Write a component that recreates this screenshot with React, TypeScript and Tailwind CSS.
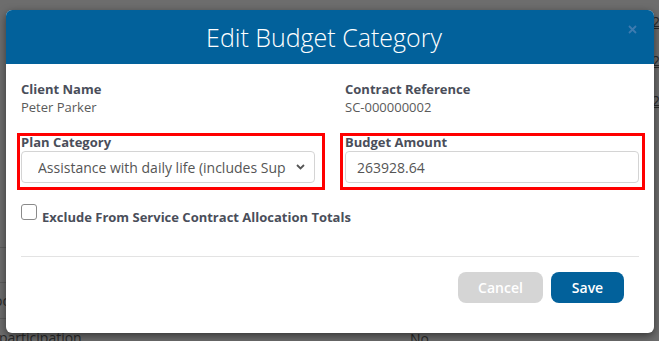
import React from "react"

const Field = ({ label, children, box }: { label: string; children: React.ReactNode; box: string }) => (
  <div className="relative">
    <div className="font-bold text-[#4a4e5a] text-[13px] leading-[18px]">{label}</div>
    {children}
    <div className={`absolute top-0 -bottom-[7px] border-[3px] border-[#ff0000] ${box}`} />
  </div>
)

export default function App() {
  return (
    <div className="relative w-[659px] h-[341px] overflow-hidden bg-[#6d6d6d] font-['Open_Sans',sans-serif]">
      {/* page behind the overlay */}
      <div className="absolute left-0 top-[247px] w-[8px] h-px bg-[#5c5c5c]" />
      <div className="absolute left-0 top-[282px] w-[8px] h-px bg-[#5c5c5c]" />
      <div className="absolute left-0 top-[318px] w-[8px] h-px bg-[#5c5c5c]" />
      <div className="absolute left-[-6px] top-[290px] text-[14px] text-[#2a2a2a]">oc</div>
      <div className="absolute left-[-1px] top-[327px] text-[14px] text-[#2a2a2a]">participation</div>
      <div className="absolute left-[410px] top-[328px] text-[14px] text-[#2a2a2a]">No</div>
      <div className="absolute left-[652px] top-[11px] text-[14px] text-[#2a2a2a] underline">2</div>
      <div className="absolute left-[652px] top-[50px] text-[14px] text-[#2a2a2a] underline">2</div>
      <div className="absolute left-[652px] top-[90px] text-[14px] text-[#2a2a2a] underline">2</div>

      {/* modal */}
      <div className="absolute left-[6px] top-[10px] w-[648px] h-[323px] bg-white rounded-[6px] overflow-hidden shadow-[0_3px_9px_rgba(0,0,0,0.5)]">
        <div className="relative h-[54px] bg-[#02619b] flex items-center justify-center pr-[12px]">
          <h2 className="text-white text-[25px] font-light leading-[34px]">Edit Budget Category</h2>
          <svg className="absolute left-[622px] top-[15px]" width="9" height="9" viewBox="0 0 9 9">
            <path d="M1 1L8 8M8 1L1 8" stroke="#3d7bb0" strokeWidth="1.8" />
          </svg>
        </div>

        <div className="px-[15px] pt-[16px]">
          <div className="grid grid-cols-2 gap-x-[30px] text-[13px] leading-[18px]">
            <div>
              <div className="font-bold text-[#4a4e5a]">Client Name</div>
              <div className="text-[#5a5a5a]">Peter Parker</div>
            </div>
            <div>
              <div className="font-bold text-[#4a4e5a]">Contract Reference</div>
              <div className="text-[#5a5a5a]">SC-000000002</div>
            </div>
          </div>

          <div className="grid grid-cols-2 gap-x-[30px] mt-[17px]">
            <Field label="Plan Category" box="-left-[4px] -right-[10px]">
              <div className="flex items-center h-[32px] border border-[#d4d4d4] rounded-[4px] pl-[16px] pr-[8px] text-[14px] text-[#555]">
                <span className="flex-1 whitespace-nowrap overflow-hidden">Assistance with daily life (includes Sup</span>
                <svg width="9" height="6" viewBox="0 0 9 6" className="mr-[1px]">
                  <path d="M1 1L4.5 4.5L8 1" stroke="#555" strokeWidth="1.8" fill="none" />
                </svg>
              </div>
            </Field>
            <Field label="Budget Amount" box="-left-[5px] -right-[6px]">
              <div className="flex items-center h-[32px] border border-[#d4d4d4] rounded-[4px] px-[11px] text-[14px] text-[#555]">
                263928.64
              </div>
            </Field>
          </div>

          <div className="flex items-start mt-[21px]">
            <div className="w-[16px] h-[16px] border border-[#8a8a8a] rounded-[3px] bg-white" />
            <span className="ml-[5px] mt-[4px] text-[13px] leading-[18px] font-bold text-[#4a4e5a]">
              Exclude From Service Contract Allocation Totals
            </span>
          </div>

          <div className="mt-[30px] h-px bg-[#e3e3e3]" />

          <div className="flex justify-end gap-[8px] mt-[15px] mr-[15px]">
            <button className="w-[85px] h-[31px] rounded-[8px] bg-[#d5d5d5] text-white text-[14px] font-semibold">Cancel</button>
            <button className="w-[73px] h-[31px] rounded-[8px] bg-[#02619b] text-white text-[14px] font-semibold">Save</button>
          </div>
        </div>
      </div>
    </div>
  )
}
